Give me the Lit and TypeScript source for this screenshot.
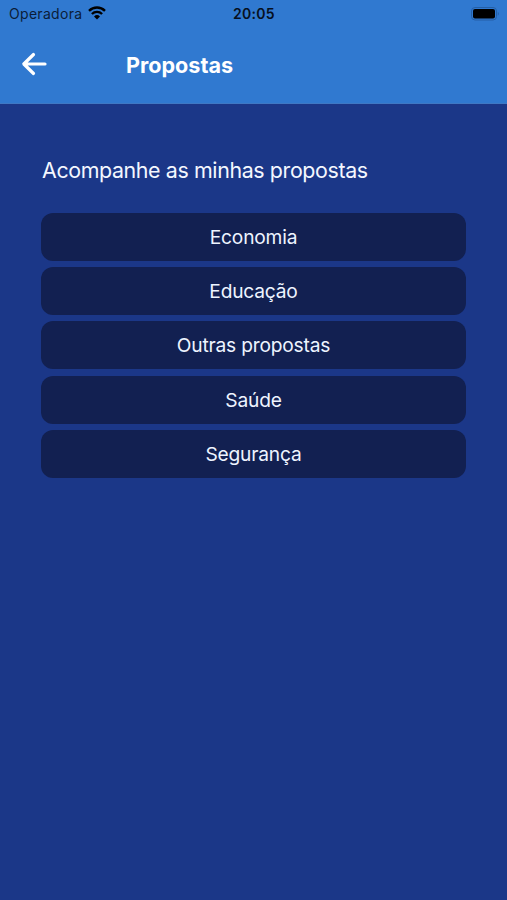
import { LitElement, html, css } from "lit";
import { customElement } from "lit/decorators.js";

const PROPOSALS = ["Economia", "Educação", "Outras propostas", "Saúde", "Segurança"];

@customElement("app-root")
export class AppRoot extends LitElement {
  static styles = css`
    :host {
      display: block;
      height: 900px;
      box-sizing: border-box;
      background: #1b3788;
      color: #f4f7ff;
      font-family: Inter, "Liberation Sans", sans-serif;
      overflow: hidden;
    }
    .top {
      height: 103px;
      background: #3079d0;
      border-bottom: 1px solid #3f78c4;
    }
    .status {
      height: 27px;
      display: grid;
      grid-template-columns: 1fr auto 1fr;
      align-items: center;
      padding: 0 7px 0 9px;
      color: #0b1d38;
      font-size: 14px;
    }
    .carrier { display: flex; align-items: center; gap: 6px; letter-spacing: 0.3px; }
    .carrier svg { margin-top: -2px; }
    .clock { font-weight: 600; letter-spacing: 0.3px; color: #06101f; margin-left: -1px; }
    .battery { justify-self: end; }
    svg { display: block; }
    .nav { height: 76px; display: flex; align-items: center; padding-left: 21px; }
    .nav svg { margin-top: -2px; }
    h1 { margin: -1px 0 0 79px; font-size: 21.6px; font-weight: 700; color: #fff; }
    main { padding: 52px 41px 0; }
    h2 {
      margin: 0 0 29px;
      padding-left: 1px;
      font-size: 21.4px;
      line-height: 28px;
      font-weight: 400;
      letter-spacing: -0.38px;
      white-space: nowrap;
    }
    .list { display: grid; gap: 6.2px; }
    button {
      height: 48px;
      padding: 0;
      border: 0;
      border-radius: 12px;
      background: #122051;
      color: #eef4ff;
      font: 400 19.2px Inter, sans-serif;
      letter-spacing: -0.2px;
    }
  `;

  render() {
    return html`
      <header class="top">
        <div class="status">
          <div class="carrier"><span>Operadora</span>
            <svg width="18" height="14" viewBox="0 0 18 14" fill="none" stroke="#000" stroke-width="2.4"><path d="M1 4.8a11.5 11.5 0 0 1 16 0M3.9 8a7.3 7.3 0 0 1 10.2 0"/><path d="M6 10.4a4.4 4.4 0 0 1 6 0L9 13.5Z" fill="#000" stroke="none"/></svg>
          </div>
          <span class="clock">20:05</span>
          <svg class="battery" width="29" height="14" viewBox="0 0 29 14"><rect x="0.5" y="0.5" width="25" height="12.5" rx="3.5" fill="none" stroke="#245fa6"/><rect x="2" y="2" width="22" height="9.5" rx="2" fill="#000"/><path d="M26.8 4.8q2 2 0 4z" fill="#245fa6"/></svg>
        </div>
        <div class="nav">
          <svg width="26" height="24" viewBox="0 0 26 24" fill="none" stroke="#fff" stroke-width="3.2" stroke-linecap="round" stroke-linejoin="round"><path d="M24 12H3M12.5 2.5 2.8 12l9.7 9.5"/></svg>
          <h1>Propostas</h1>
        </div>
      </header>
      <main>
        <h2>Acompanhe as minhas propostas</h2>
        <div class="list">${PROPOSALS.map((name) => html`<button>${name}</button>`)}</div>
      </main>
    `;
  }
}
